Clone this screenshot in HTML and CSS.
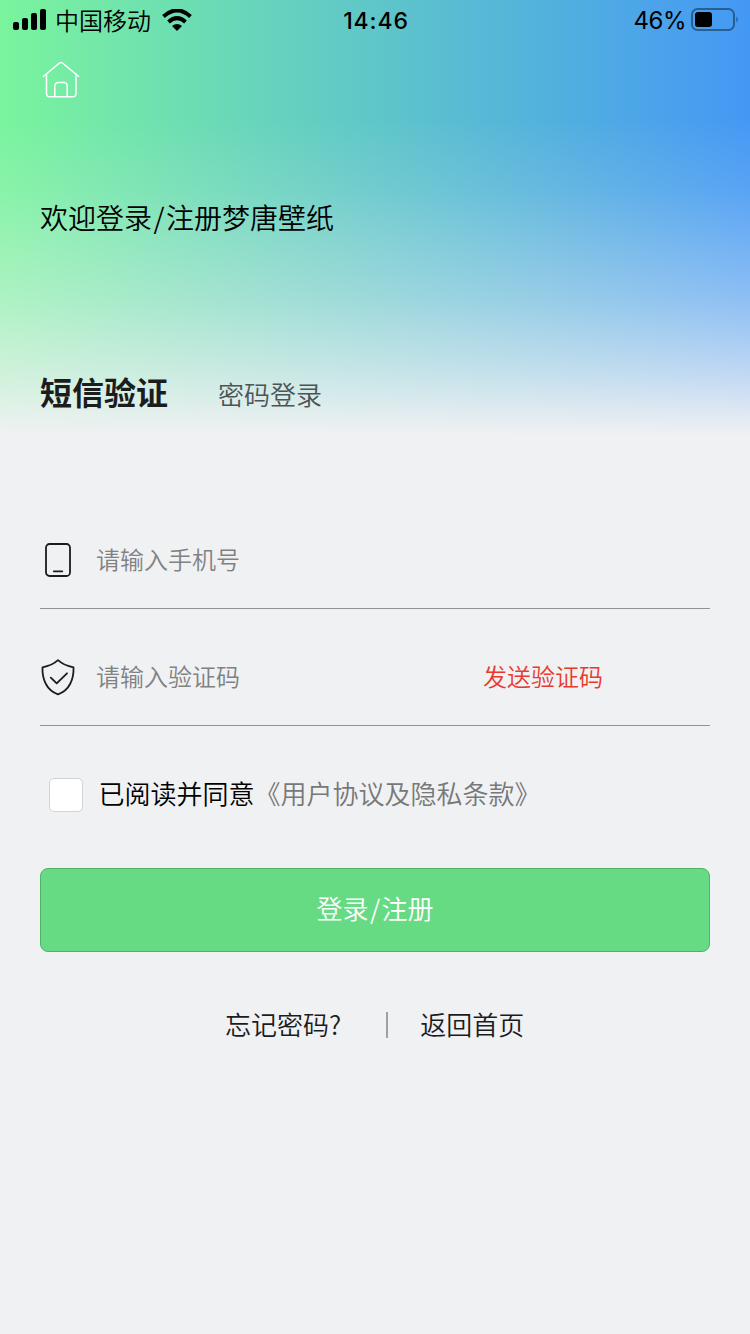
FILE: index.html
```html
<!DOCTYPE html>
<html lang="zh-CN">
<head>
    <meta charset="UTF-8">
    <meta name="viewport" content="width=device-width, initial-scale=1.0">
    <title>登录/注册</title>
    <link rel="stylesheet" href="styles.css">
</head>
<body>
    <header class="top_area">
        <div class="status_bar">
            <div class="status_left">
                <svg class="signal" width="34" height="22" viewBox="0 0 34 22">
                    <rect x="0" y="13" width="6" height="8" rx="2"/>
                    <rect x="9" y="9" width="6" height="12" rx="2"/>
                    <rect x="18" y="4" width="6" height="17" rx="2"/>
                    <rect x="27" y="0" width="6" height="21" rx="2"/>
                </svg>
                <span class="carrier">中国移动</span>
                <svg class="wifi" width="30" height="22" viewBox="0 0 30 22">
                    <path d="M1.500 7.500Q15-4.800 28.500 7.500" fill="none" stroke="#000" stroke-width="4"/>
                    <path d="M6.500 13Q15 5.400 23.500 13" fill="none" stroke="#000" stroke-width="4"/>
                    <path d="M10 17Q15 13 20 17L15 22Z"/>
                </svg>
            </div>
            <span class="time">14:46</span>
            <div class="status_right">
                <span>46%</span>
                <svg width="48" height="24" viewBox="0 0 48 24">
                    <rect x="1" y="1" width="42" height="21" rx="5.500" fill="none" stroke="#000" stroke-opacity=".4" stroke-width="2"/>
                    <rect x="4" y="4" width="17" height="15" rx="3"/>
                    <path d="M45.500 8.500Q48 11.500 45.500 14.500Z" opacity=".5"/>
                </svg>
            </div>
        </div>
        <nav>
            <a href="#" class="home">
                <svg width="38" height="38" viewBox="0 0 38 38" fill="none" stroke="#fff" stroke-width="1.500" stroke-linecap="round" stroke-linejoin="round">
                    <path d="M1.300 15.500L17.500 2Q19 .8 20.500 2L36.700 15.500"/>
                    <path d="M4.500 13V32.500Q4.500 35.800 7.800 35.800H30.700Q34 35.800 34 32.500V13"/>
                    <path d="M12.800 35.500V25.500Q12.800 21.500 16.500 21.500H21.700Q25.200 21.500 25.200 25.500V35.500"/>
                </svg>
            </a>
        </nav>
        <h1>欢迎登录<span class="slash">/</span>注册梦唐壁纸</h1>
        <ul class="tab_menu">
            <li class="on">短信验证</li>
            <li>密码登录</li>
        </ul>
    </header>
    <main class="login_area">
        <form>
            <div class="input_box">
                <svg width="36" height="38" viewBox="0 0 36 38" fill="none" stroke="#1b1c1e" stroke-width="1.800" stroke-linecap="round">
                    <rect x="6" y="3" width="24" height="32" rx="3.500"/>
                    <path d="M13.800 30.300H22.300"/>
                </svg>
                <input type="text" placeholder="请输入手机号">
            </div>
            <div class="input_box">
                <svg width="36" height="38" viewBox="0 0 36 38" fill="none" stroke="#1b1c1e" stroke-width="1.800" stroke-linecap="round" stroke-linejoin="round">
                    <path d="M18 2.200Q24 7.700 33.500 9.300C34 21 29.500 32.500 18 36.300C6.500 32.500 2 21 2.500 9.300Q12 7.700 18 2.200Z"/>
                    <path d="M10.800 19.600L16.700 25.400L27 15.300"/>
                </svg>
                <input type="text" placeholder="请输入验证码">
                <a href="#" class="send_code">发送验证码</a>
            </div>
            <label class="agree">
                <input type="checkbox">
                <span>已阅读并同意<a href="#">《用户协议及隐私条款》</a></span>
            </label>
            <button type="button" class="login_btn">登录<span class="slash">/</span>注册</button>
        </form>
        <div class="link_box">
            <a href="#">忘记密码?</a>
            <span class="line"></span>
            <a href="#">返回首页</a>
        </div>
    </main>
</body>
</html>
```

FILE: styles.css
```css
*{
    margin: 0;
    padding: 0;
    box-sizing: border-box;
}
body{
    min-height: 1334px;
    background-color: #f0f1f3;
    font-family: "Noto Sans CJK SC", sans-serif;
    font-weight: 350;
    color: #000;
}
a{
    color: inherit;
    text-decoration: none;
}
svg{
    display: block;
    flex-shrink: 0;
}
.top_area{
    height: 440px;
    background-image:
        linear-gradient(to bottom, rgba(240,241,243,0) 27%, rgba(240,241,243,0.12) 43%, rgba(240,241,243,0.43) 68%, rgba(240,241,243,0.7) 84%, #f0f1f3 99%),
        linear-gradient(to right, #7af49d, #4498f5);
}
.status_bar{
    display: grid;
    grid-template-columns: 1fr auto 1fr;
    align-items: center;
    height: 40px;
    padding: 0 11px 0 13px;
    font-size: 24px;
    line-height: 38px;
}
.status_left{
    display: flex;
    align-items: center;
}
.carrier{
    margin: 0 11px 0 8px;
}
.time{
    padding-top: 2px;
    font-family: Inter, sans-serif;
    font-size: 23px;
    font-weight: 550;
    letter-spacing: 0.9px;
}
.status_right{
    display: flex;
    align-items: center;
    justify-content: flex-end;
    gap: 5px;
    font-family: Inter, sans-serif;
    font-weight: 400;
    font-size: 24px;
}
.status_right span{
    padding-top: 2px;
    letter-spacing: -0.5px;
}
.status_right svg{
    margin-bottom: 1px;
}
nav{
    height: 88px;
    padding: 21px 42px 0;
}
.home{
    display: block;
    width: 38px;
}
h1{
    height: 180px;
    padding: 69px 40px 0;
    font-size: 28px;
    line-height: 40px;
    font-weight: 350;
}
.slash{
    padding: 0 1.5px;
}
.tab_menu{
    display: flex;
    align-items: baseline;
    gap: 50px;
    padding: 59px 40px 0;
    list-style: none;
    font-size: 26px;
    line-height: 48px;
    color: #4e5456;
}
.tab_menu .on{
    font-size: 32px;
    font-weight: 700;
    color: #1b1c1e;
}
.login_area{
    padding: 52px 40px 0;
}
.input_box{
    display: flex;
    align-items: center;
    height: 117px;
    padding-top: 20px;
    border-bottom: 1px solid #929395;
}
.input_box input{
    width: 386px;
    height: 60px;
    padding: 0 0 4px 20px;
    border: none;
    outline: none;
    background: none;
    font: inherit;
    font-size: 24px;
}
.input_box input::placeholder{
    color: #808183;
}
.send_code{
    padding-bottom: 4px;
    margin-left: 21px;
    font-size: 24px;
    color: #e8392f;
}
.agree{
    display: flex;
    align-items: center;
    gap: 16px;
    height: 40px;
    margin: 49px 0 53px 8.5px;
    font-size: 26px;
    line-height: 40px;
}
.agree input{
    appearance: none;
    width: 34px;
    height: 34px;
    border: 1.5px solid #d3d3d5;
    border-radius: 5px;
    background-color: #fff;
}
.agree span{
    padding-bottom: 5px;
}
.agree a{
    color: #777879;
}
.login_btn{
    display: block;
    width: 100%;
    height: 84px;
    padding-bottom: 5px;
    border: 1px solid #4fb36a;
    border-radius: 8px;
    background-color: #66db84;
    color: #fff;
    font: inherit;
    font-size: 26px;
}
.link_box{
    display: flex;
    align-items: center;
    height: 40px;
    margin-top: 53px;
    padding-left: 185px;
    font-size: 26px;
    color: #1b1c1e;
}
.link_box a{
    padding-bottom: 4px;
}
.line{
    width: 2px;
    height: 26px;
    margin: 0 32px 0 45px;
    background-color: #a0a1a3;
}
```
